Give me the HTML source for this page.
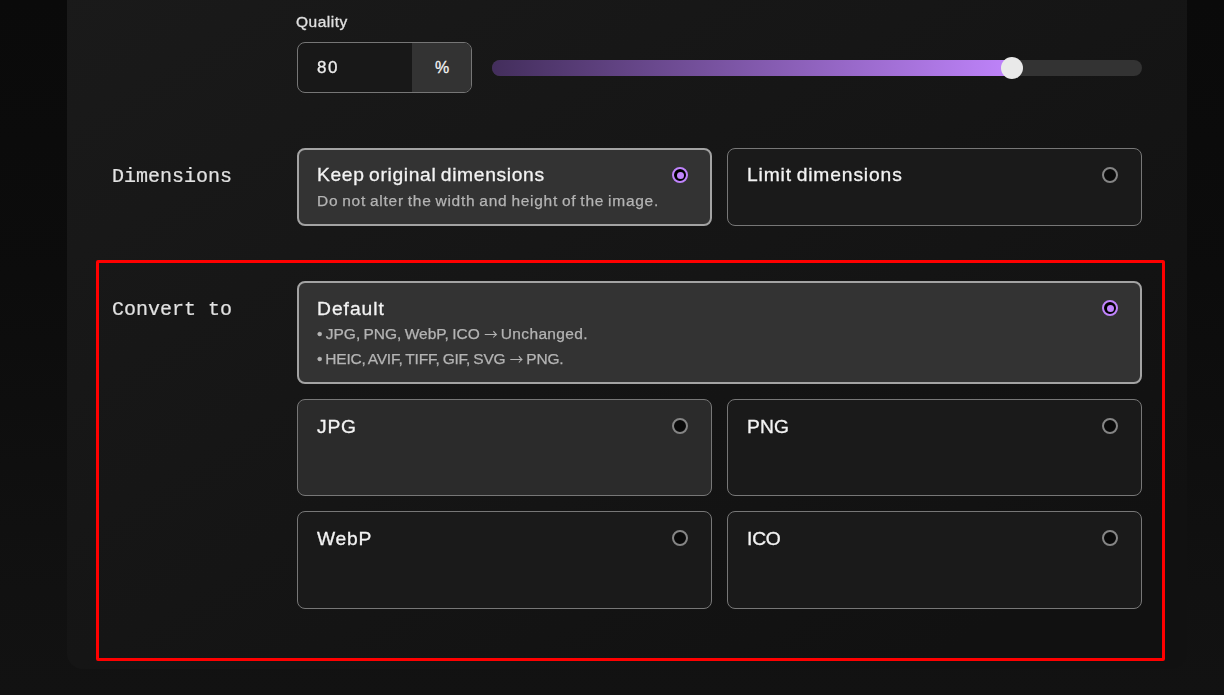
<!DOCTYPE html>
<html lang="en">
<head>
<meta charset="utf-8">
<title>Image settings</title>
<style>
*{box-sizing:border-box;margin:0;padding:0}
html,body{width:1224px;height:695px;overflow:hidden;background:#0b0b0b}
body{background:linear-gradient(180deg,#0a0a0a 0%,#0c0c0c 40%,#111 85%,#121212 100%)}
body{position:relative;font-family:"Liberation Sans",Arial,sans-serif;color:#ededed;-webkit-font-smoothing:antialiased}
.panel{position:absolute;left:67px;top:-20px;width:1120px;height:689px;border-radius:16px;background:linear-gradient(to bottom right,#1a1a1a 0%,#151515 50%,#111 88%,#111 100%)}
.abs{position:absolute}
.t,.s,.mono,.lbl,.num{will-change:transform}
.mono{font-family:"Liberation Mono","DejaVu Sans Mono",monospace;font-size:20px;line-height:24px;color:#e2e2e2;-webkit-text-stroke:.2px #e2e2e2;white-space:nowrap}
.lbl{font-size:15.5px;line-height:18px;color:#e0e0e0;letter-spacing:.5px;-webkit-text-stroke:.3px #e0e0e0;white-space:nowrap}
.inp{left:297px;top:42px;width:175px;height:51px;border:1px solid #767676;border-radius:8px;background:#181818;overflow:hidden}
.inp .num{position:absolute;left:18.5px;top:14.5px;font-size:17px;line-height:20px;letter-spacing:1.6px;-webkit-text-stroke:.3px #ededed;color:#ededed}
.inp .suf{position:absolute;left:114px;top:0;width:60px;height:49px;background:#333;text-align:center;font-size:16px;line-height:49px;color:#f2f2f2;-webkit-text-stroke:.3px #f2f2f2}
.track{left:492px;top:60px;width:650px;height:16px;border-radius:8px;background:#333}
.fill{left:492px;top:60px;width:525px;height:16px;border-radius:8px 0 0 8px;background:linear-gradient(90deg,#432e5c 0%,#c084fc 100%)}
.thumb{left:1001px;top:57px;width:22px;height:22px;border-radius:50%;background:#e9e9e9}
.card{position:absolute;border:1px solid #777;border-radius:8px;background:#1a1a1a}
.card.sel{border:2px solid #a3a3a3;background:#333}
.card.hov{background:#2b2b2b}
.t{position:absolute;-webkit-text-stroke:0.3px #f3f3f3;word-spacing:-1.5px;font-size:19.25px;line-height:24px;color:#f3f3f3;white-space:nowrap}
.s{position:absolute;-webkit-text-stroke:0.25px #b4b4b4;word-spacing:-1px;font-size:15.5px;line-height:20px;color:#b4b4b4;white-space:nowrap}
.ar{font-family:"Noto Sans CJK JP","Liberation Sans",sans-serif;font-size:13.5px;line-height:0;-webkit-text-stroke:0;letter-spacing:0;margin:0 3px 0 4.5px;position:relative;top:0px}
.radio{position:absolute;width:16px;height:16px;border-radius:50%;border:2px solid #858585;background:#0a0a0a}
.radio.on{border-color:#c084fc;background:#000}
.radio.on::after{content:"";position:absolute;left:2.5px;top:2.5px;width:7px;height:7px;border-radius:50%;background:#c084fc}
.red{left:96px;top:260px;width:1069px;height:401px;border:3px solid #ff0000;border-radius:2px}
</style>
</head>
<body>
<div class="panel"></div>

<div class="abs lbl" style="left:296px;top:13px">Quality</div>
<div class="abs inp"><span class="num">80</span><span class="suf">%</span></div>
<div class="abs track"></div>
<div class="abs fill"></div>
<div class="abs thumb"></div>

<div class="abs mono" style="left:112px;top:165px">Dimensions</div>
<div class="card sel" style="left:297px;top:148px;width:415px;height:78px"></div>
<div class="t" style="left:317px;top:163.25px;letter-spacing:0.65px">Keep original dimensions</div>
<div class="s" style="left:317px;top:191px;letter-spacing:0.72px">Do not alter the width and height of the image.</div>
<div class="radio on" style="left:672px;top:167px"></div>
<div class="card" style="left:727px;top:148px;width:415px;height:78px"></div>
<div class="t" style="left:747px;top:163.25px;letter-spacing:0.86px">Limit dimensions</div>
<div class="radio" style="left:1102px;top:167px"></div>

<div class="abs mono" style="left:112px;top:298px">Convert to</div>
<div class="card sel" style="left:297px;top:281px;width:845px;height:103px"></div>
<div class="t" style="left:317px;top:296.5px;letter-spacing:0.98px">Default</div>
<div class="s" style="left:317px;top:324px">• JPG, PNG, WebP, ICO<span class="ar">→</span><span style="letter-spacing:.35px">Unchanged.</span></div>
<div class="s" style="left:317px;top:349px"><span style="letter-spacing:-.22px">• HEIC, AVIF, TIFF, GIF, SVG</span><span class="ar">→</span><span style="letter-spacing:-.2px">PNG.</span></div>
<div class="radio on" style="left:1102px;top:300px"></div>

<div class="card hov" style="left:297px;top:399px;width:415px;height:97px"></div>
<div class="t" style="left:317px;top:414.75px;letter-spacing:0.77px">JPG</div>
<div class="radio" style="left:672px;top:418px"></div>
<div class="card" style="left:727px;top:399px;width:415px;height:97px"></div>
<div class="t" style="left:747px;top:414.75px;letter-spacing:0.1px">PNG</div>
<div class="radio" style="left:1102px;top:418px"></div>

<div class="card" style="left:297px;top:511px;width:415px;height:98px"></div>
<div class="t" style="left:317px;top:526.75px;letter-spacing:0.72px">WebP</div>
<div class="radio" style="left:672px;top:530px"></div>
<div class="card" style="left:727px;top:511px;width:415px;height:98px"></div>
<div class="t" style="left:747px;top:526.75px;letter-spacing:-0.2px">ICO</div>
<div class="radio" style="left:1102px;top:530px"></div>

<div class="abs red"></div>
</body>
</html>
